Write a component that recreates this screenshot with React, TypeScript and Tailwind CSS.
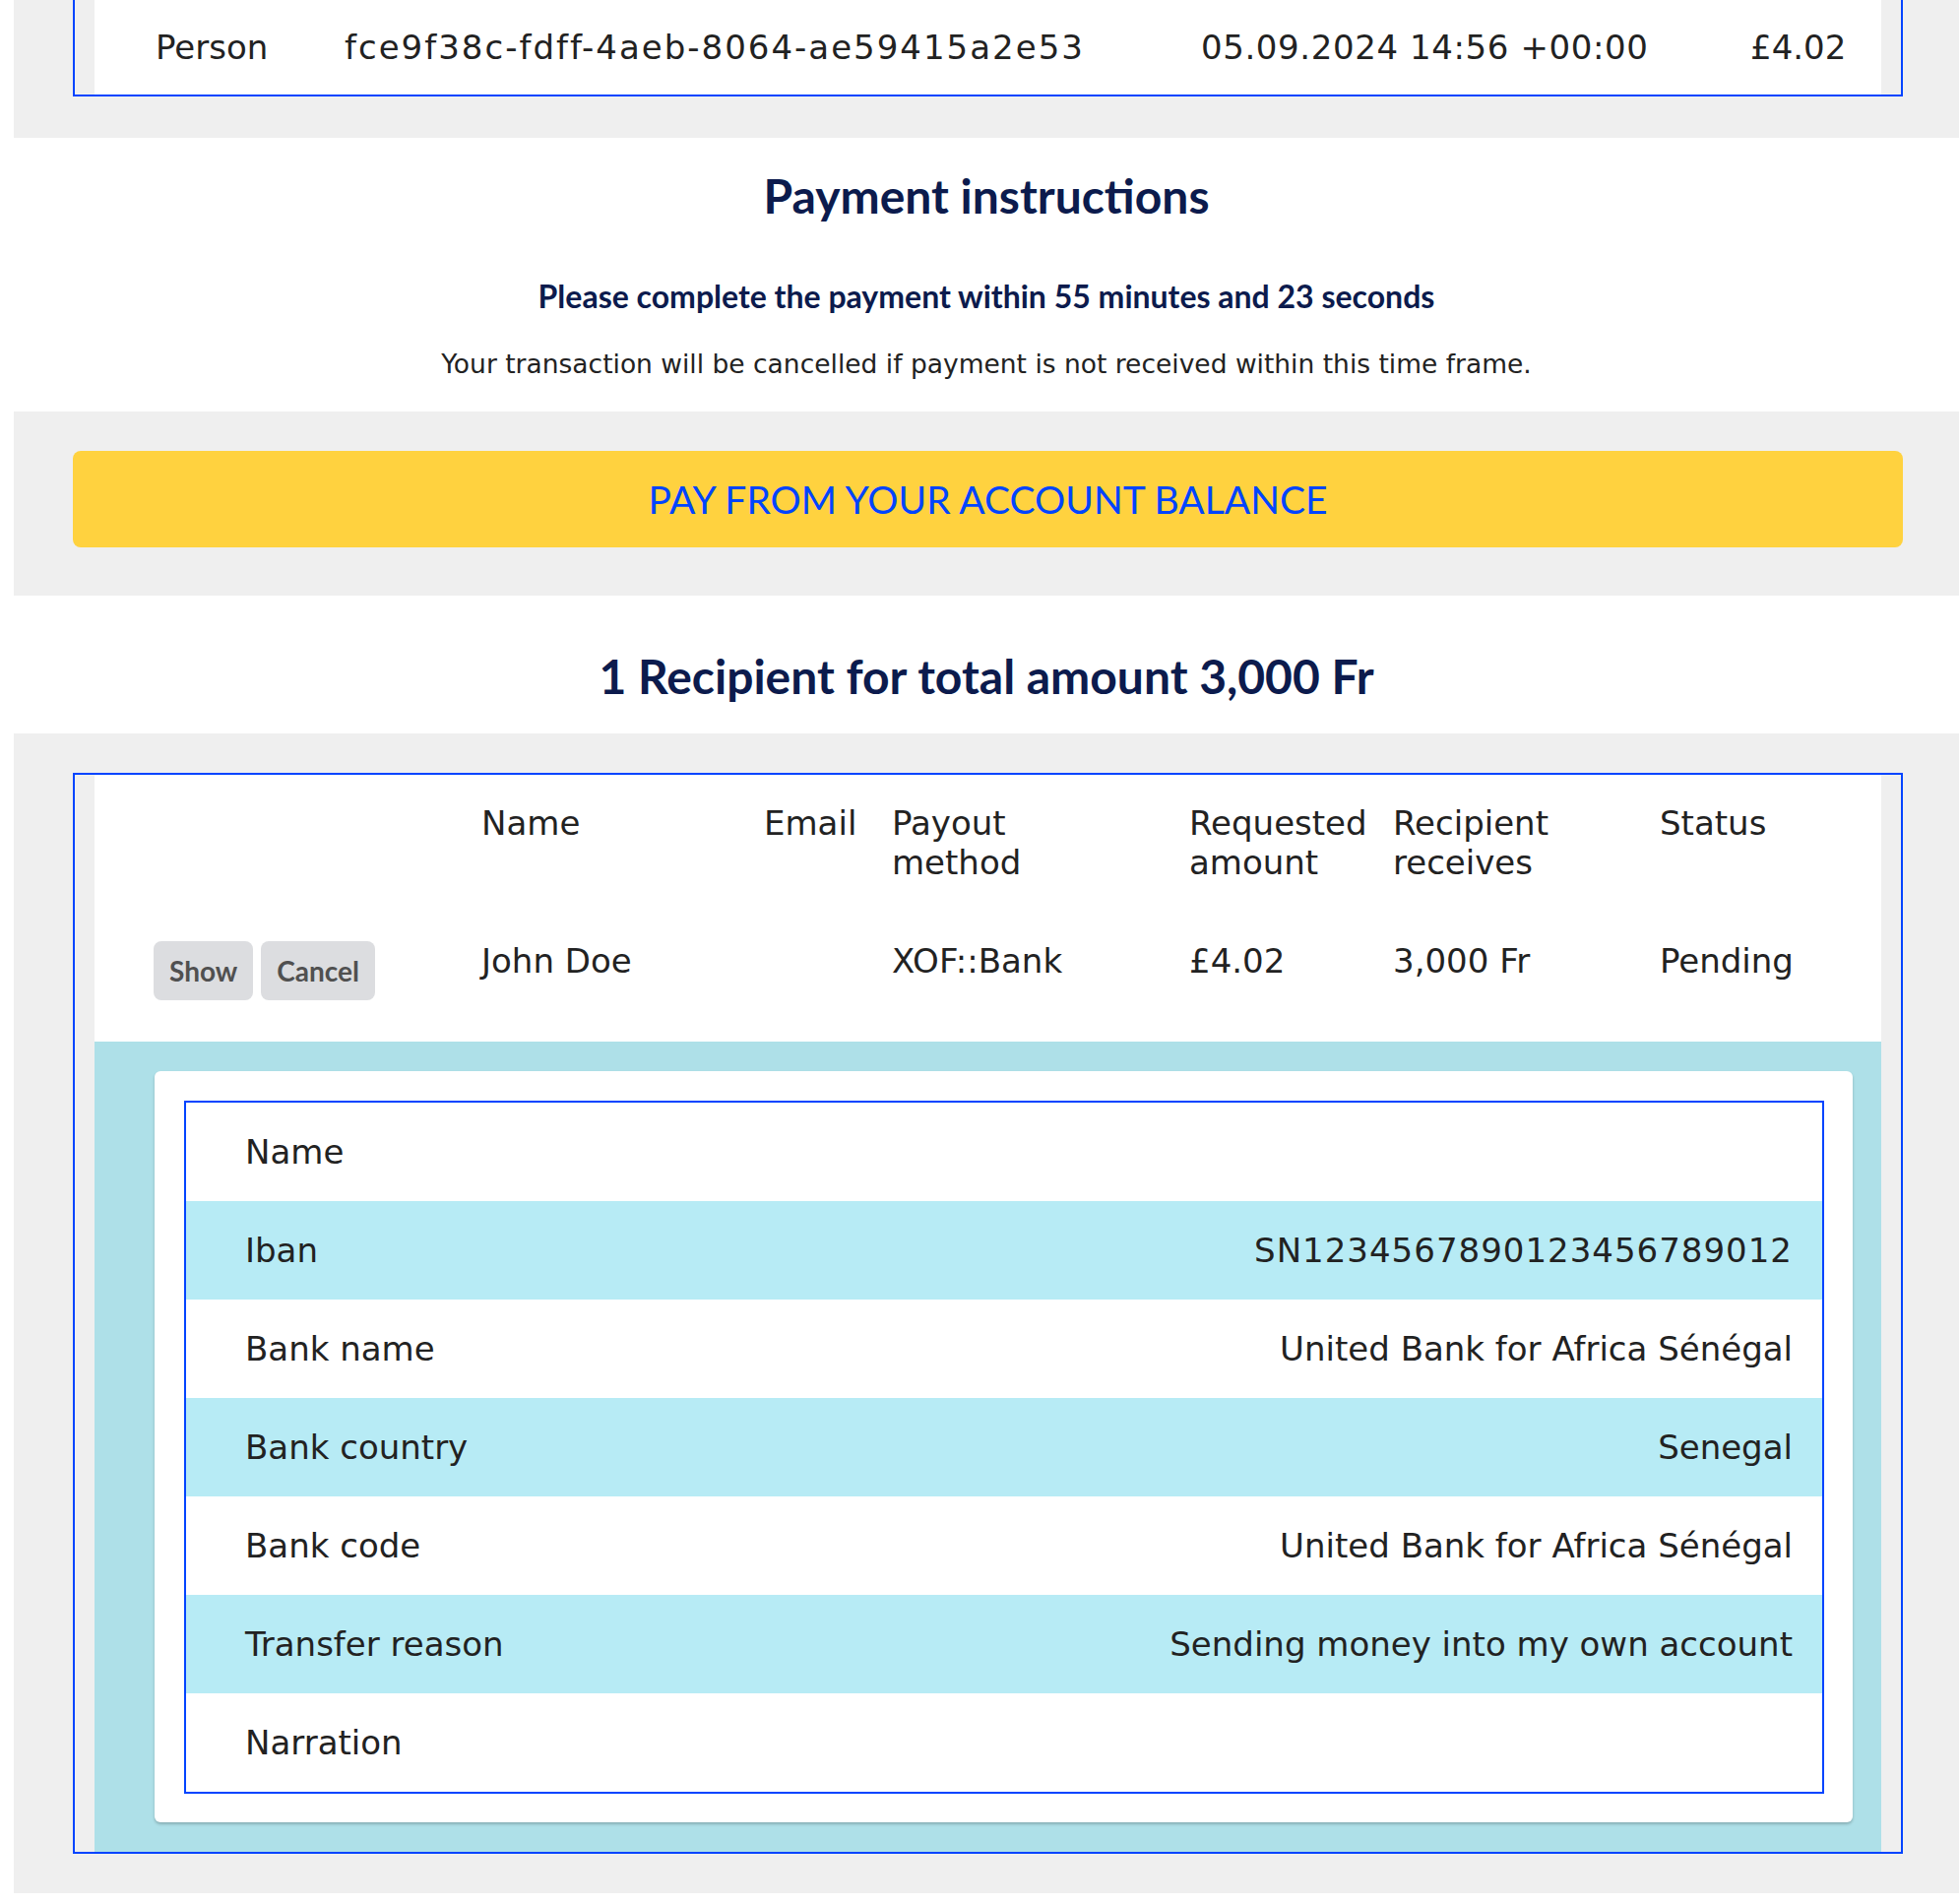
import React from "react";

const details: [string, string][] = [
  ["Name", ""],
  ["Iban", "SN1234567890123456789012"],
  ["Bank name", "United Bank for Africa Sénégal"],
  ["Bank country", "Senegal"],
  ["Bank code", "United Bank for Africa Sénégal"],
  ["Transfer reason", "Sending money into my own account"],
  ["Narration", ""],
];

export default function App() {
  return (
    <div className="min-h-[1934px] bg-white font-['DejaVu_Sans',sans-serif] text-[#222]">
      <div className="ml-[14px]">
        {/* top gray section with previous table end */}
        <section className="bg-[#efefef] pl-[60px] pr-[57px] pb-[42px]">
          <div className="border-x-2 border-b-2 border-[#0044ff] px-[20px]">
            <div className="bg-white h-[96px] grid grid-cols-[192px_870px_558px_1fr] items-center pl-[62px] text-[34px] leading-[40px]">
              <span>Person</span>
              <span className="tracking-[2px]">fce9f38c-fdff-4aeb-8064-ae59415a2e53</span>
              <span className="tracking-[0.6px]">05.09.2024 14:56 +00:00</span>
              <span>£4.02</span>
            </div>
          </div>
        </section>

        {/* payment instructions */}
        <section className="bg-white pt-[31px] pb-[33px] text-center">
          <h2 className="font-['Lato',sans-serif] font-bold text-[48px] leading-[56px] text-[#0c1b4d]">
            Payment instructions
          </h2>
          <p className="mt-[55px] font-['Lato',sans-serif] font-bold text-[32px] leading-[38px] text-[#0c1b4d]">
            Please complete the payment within 55 minutes and 23 seconds
          </p>
          <p className="mt-[35px] text-[26.5px] leading-[30px] text-[#222]">
            Your transaction will be cancelled if payment is not received within this time frame.
          </p>
        </section>

        {/* pay button */}
        <section className="bg-[#efefef] pl-[60px] pr-[57px] pt-[40px] pb-[49px]">
          <button className="w-full h-[98px] rounded-[8px] bg-[#ffd23f] font-['Lato',sans-serif] text-[39px] text-[#0044ff] flex items-center justify-center">
            PAY FROM YOUR ACCOUNT BALANCE
          </button>
        </section>

        {/* recipients heading */}
        <section className="bg-white pt-[54px] pb-[30px] text-center">
          <h2 className="font-['Lato',sans-serif] font-bold text-[48px] leading-[56px] text-[#0c1b4d]">
            1 Recipient for total amount 3,000 Fr
          </h2>
        </section>

        {/* recipients table */}
        <section className="bg-[#efefef] pl-[60px] pr-[57px] py-[40px]">
          <div className="border-2 border-[#0044ff] px-[20px]">
            <div className="bg-white">
              <div className="grid grid-cols-[333px_287px_130px_302px_207px_271px_1fr] pl-[60px] text-[34px] leading-[40px] text-[#222]">
                <div className="pt-[29px] pb-[30px]"></div>
                <div className="pt-[29px] pb-[30px]">Name</div>
                <div className="pt-[29px] pb-[30px]">Email</div>
                <div className="pt-[29px] pb-[30px]">
                  Payout
                  <br />
                  method
                </div>
                <div className="pt-[29px] pb-[30px]">
                  Requested
                  <br />
                  amount
                </div>
                <div className="pt-[29px] pb-[30px]">
                  Recipient
                  <br />
                  receives
                </div>
                <div className="pt-[29px] pb-[30px]">Status</div>

                <div className="pt-[30px] pb-[42px] flex gap-[8px]">
                  <span className="h-[60px] px-[16px] rounded-[8px] bg-[#dcdde0] text-[#505050] font-['Lato',sans-serif] font-bold text-[28px] flex items-center">
                    Show
                  </span>
                  <span className="h-[60px] px-[16px] rounded-[8px] bg-[#dcdde0] text-[#505050] font-['Lato',sans-serif] font-bold text-[28px] flex items-center">
                    Cancel
                  </span>
                </div>
                <div className="pt-[30px]">John Doe</div>
                <div className="pt-[30px]"></div>
                <div className="pt-[30px]">XOF::Bank</div>
                <div className="pt-[30px]">£4.02</div>
                <div className="pt-[30px]">3,000 Fr</div>
                <div className="pt-[30px]">Pending</div>
              </div>

              <div className="bg-[#aee0e8] pl-[61px] pr-[29px] py-[30px]">
                <div className="bg-white rounded-[6px] shadow-[0_2px_3px_rgba(0,0,0,0.22)] pl-[30px] pr-[29px] pt-[30px] pb-[29px]">
                  <div className="border-2 border-[#0044ff]">
                    {details.map(([label, value], i) => (
                      <div
                        key={label}
                        className={
                          "h-[100px] flex items-center justify-between pl-[60px] pr-[30px] text-[34px] " +
                          (i % 2 === 1 ? "bg-[#b7ebf5]" : "bg-white")
                        }
                      >
                        <span>{label}</span>
                        <span className={label === "Iban" ? "tracking-[1px]" : ""}>{value}</span>
                      </div>
                    ))}
                  </div>
                </div>
              </div>
            </div>
          </div>
        </section>
      </div>
    </div>
  );
}
